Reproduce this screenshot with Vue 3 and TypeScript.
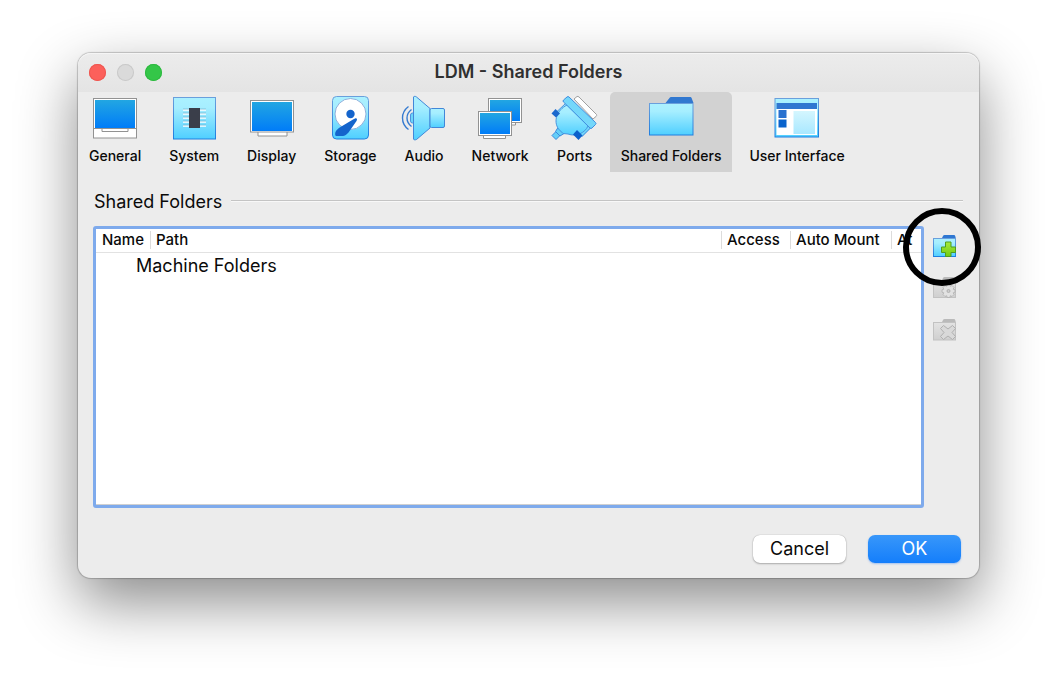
<script setup lang="ts">
import { ref } from 'vue'

interface Section {
  id: string
  label: string
}

const sections: Section[] = [
  { id: 'general', label: 'General' },
  { id: 'system', label: 'System' },
  { id: 'display', label: 'Display' },
  { id: 'storage', label: 'Storage' },
  { id: 'audio', label: 'Audio' },
  { id: 'network', label: 'Network' },
  { id: 'ports', label: 'Ports' },
  { id: 'folders', label: 'Shared Folders' },
  { id: 'interface', label: 'User Interface' },
]

const current = ref('folders')
const pins: number[] = [16, 20, 24, 28, 32]
</script>

<template>
  <div class="desktop">
    <main class="window">
      <header class="titlebar">
        <div class="lights">
          <button class="light close" type="button" aria-label="Close"></button>
          <button class="light minimise" type="button" aria-label="Minimise" disabled></button>
          <button class="light zoom" type="button" aria-label="Zoom"></button>
        </div>
        <h1>LDM - Shared Folders</h1>
      </header>

      <svg class="defs" width="0" height="0" aria-hidden="true">
        <defs>
          <linearGradient id="screen" x1="0" y1="0" x2="0" y2="1">
            <stop offset="0" stop-color="#22a6e2" />
            <stop offset="1" stop-color="#007cf8" />
          </linearGradient>
          <linearGradient id="aqua" x1="0" y1="0" x2="0" y2="1">
            <stop offset="0" stop-color="#abf1ff" />
            <stop offset="0.25" stop-color="#a6eeff" />
            <stop offset="1" stop-color="#4fcfff" />
          </linearGradient>
          <linearGradient id="edge" x1="0" y1="0" x2="0" y2="1">
            <stop offset="0" stop-color="#6a9fdc" />
            <stop offset="1" stop-color="#1f7fe0" />
          </linearGradient>
          <linearGradient id="pane" x1="0" y1="0" x2="0" y2="1">
            <stop offset="0" stop-color="#d4f6fe" />
            <stop offset="1" stop-color="#a9e8ff" />
          </linearGradient>
          <linearGradient id="leaf" x1="0" y1="0" x2="0" y2="1">
            <stop offset="0" stop-color="#a6ea3e" />
            <stop offset="1" stop-color="#6fcc10" />
          </linearGradient>
          <linearGradient id="ash" x1="0" y1="0" x2="0" y2="1">
            <stop offset="0" stop-color="#e3e3e3" />
            <stop offset="1" stop-color="#cfcfcf" />
          </linearGradient>
        </defs>
      </svg>

      <nav class="toolbar" aria-label="Settings sections">
        <button
          v-for="s in sections"
          :key="s.id"
          type="button"
          class="tab"
          :class="{ active: current === s.id }"
          :aria-pressed="current === s.id"
          @click="current = s.id"
        >
          <svg class="icon" viewBox="0 0 48 48" aria-hidden="true">
            <g v-if="s.id === 'general'">
              <rect x="2.5" y="4.5" width="43" height="39.5" fill="#fff" stroke="#929292" />
              <rect x="4" y="6" width="40" height="28" fill="url(#screen)" />
              <path d="M3 34.5H45M11 35V37.5H37V35" fill="none" stroke="#929292" />
            </g>
            <g v-else-if="s.id === 'system'">
              <rect x="3.5" y="3.5" width="42" height="41.5" fill="url(#aqua)" stroke="url(#edge)" />
              <g v-for="y in pins" :key="y">
                <path :d="`M13 ${y}h23`" stroke="#fff" stroke-width="1.5" />
                <path :d="`M13 ${y - 1}h23`" stroke="#65a9c8" stroke-width="0.6" />
              </g>
              <rect x="19" y="14" width="11" height="20" fill="#3a3e4a" />
            </g>
            <g v-else-if="s.id === 'display'">
              <path d="M10 37.5H39V42H10Z" fill="#fff" stroke="#929292" />
              <rect x="2.5" y="6.5" width="43" height="31.5" fill="#fff" stroke="#929292" />
              <rect x="4" y="8" width="40" height="29" fill="url(#screen)" />
            </g>
            <g v-else-if="s.id === 'storage'">
              <rect x="6.5" y="2.5" width="36" height="42.5" rx="4" fill="url(#aqua)" stroke="url(#edge)" />
              <circle cx="24.5" cy="20" r="15.5" fill="#fff" stroke="#8fb0dc" />
              <circle cx="24.5" cy="20" r="4.2" fill="#1464cc" />
              <path d="M27 25.5L29 24.5C31 23.8 31.5 25.5 30.5 27L22.500 38.500C20 41.500 18 42 15 42H10.500C8.800 42 9 39.500 9.500 38C10.300 35.800 12.500 34.500 14.500 33Z" fill="#1464cc" />
            </g>
            <g v-else-if="s.id === 'audio'" stroke-linejoin="round">
              <path d="M8.500 12.500C.5 18.500 .5 29.500 8.500 35.500M11.500 15.500C5.500 20 5.500 28 11.500 32.500" fill="none" stroke="#367bd0" stroke-width="1.4" />
              <rect x="10.5" y="19" width="5" height="10" rx="2" fill="#6cd6fb" stroke="#4d92dd" />
              <path d="M13.500 3C13.500 2.300 15.500 2 16.500 3L30 14.500V34L16.500 45.500C15.500 46 13.500 46 13.500 45Z" fill="url(#aqua)" stroke="#4287d8" />
              <rect x="30" y="14.5" width="14.5" height="19" rx="1.5" fill="url(#aqua)" stroke="#4287d8" />
            </g>
            <g v-else-if="s.id === 'network'">
              <path d="M21 28.5H39.5V31H21Z" fill="#fff" stroke="#929292" />
              <rect x="12.5" y="4.5" width="33" height="24" fill="#fff" stroke="#929292" />
              <rect x="14" y="6" width="30" height="21" fill="url(#screen)" />
              <path d="M7.5 41.5H29.5V44.5H7.5Z" fill="#fff" stroke="#929292" />
              <rect x="2.5" y="17.5" width="33" height="24" fill="#fff" stroke="#929292" />
              <rect x="4" y="19" width="30" height="21" fill="url(#screen)" />
            </g>
            <g v-else-if="s.id === 'ports'" stroke-linejoin="round">
              <path d="M23 5L26 2.500Q27 2 28 3L45.500 20.500Q46 21.500 45 22.500L42 25Z" fill="#fff" stroke="#a0a0a0" />
              <path d="M15 9L5 18.500L9.500 23L18 14Z" fill="#9be5fb" stroke="#4694df" />
              <path d="M36 28L26.500 38L31 42.500L40 33.500Z" fill="#72d7fa" stroke="#2f83db" />
              <path d="M5 37.500L9 41.500L5 45.500L1 41.500Z" fill="#65cff8" stroke="#3989dc" />
              <path d="M7 33.500L13 39.500L9 42L4.500 37.500Z" fill="#65cff8" stroke="#3989dc" />
              <path d="M16 11L37 32C34 39 25 43 17 40L12 39.500L7.500 35C2 27 6 16 16 11Z" fill="url(#aqua)" stroke="#4694df" />
              <path d="M4.500 15L9 19.500L5 23.500L0.500 19.500Z" fill="#1b68cd" />
              <path d="M26 36L31.500 41.500L27.500 46L22 40.500Z" fill="#0c60cb" />
              <path d="M16 3Q17 2 18 3L44.500 28.500Q45.500 29.500 44.500 30.500L41 34Q40 35 39 34L12.500 8Q11.500 7 12.500 6Z" fill="#74d7fa" stroke="#3f8edf" />
            </g>
            <g v-else-if="s.id === 'folders'">
              <path d="M18.500 9L22.500 4C23 3.300 23.500 3 24.500 3H43C44 3 44.500 3.500 44.800 4.500L46.500 9Z" fill="#3178d0" />
              <rect x="2.5" y="9.5" width="43.5" height="31.5" fill="url(#aqua)" stroke="url(#edge)" />
            </g>
            <g v-else>
              <rect x="2" y="4.5" width="43.5" height="38.5" fill="url(#aqua)" stroke="url(#edge)" />
              <rect x="3.5" y="9" width="40.5" height="6" fill="#3076d1" />
              <rect x="3.5" y="15" width="40.5" height="26" fill="#fff" />
              <rect x="5.5" y="16" width="8" height="8" fill="#2871cf" />
              <rect x="5.5" y="25.5" width="8" height="8" fill="#0963cc" />
              <rect x="20.5" y="17" width="21.5" height="23" fill="url(#pane)" />
            </g>
          </svg>
          <span>{{ s.label }}</span>
        </button>
      </nav>

      <section class="content" aria-labelledby="group-title">
        <div class="group">
          <h2 id="group-title">Shared Folders</h2>
          <div class="rule"></div>
        </div>

        <div class="editor">
          <div class="list">
            <table>
              <colgroup>
                <col class="c-name" />
                <col class="c-path" />
                <col class="c-access" />
                <col class="c-auto" />
                <col class="c-at" />
              </colgroup>
              <thead>
                <tr>
                  <th scope="col"><span>Name</span></th>
                  <th scope="col"><span>Path</span></th>
                  <th scope="col"><span>Access</span></th>
                  <th scope="col"><span>Auto Mount</span></th>
                  <th scope="col"><span>At</span></th>
                </tr>
              </thead>
              <tbody>
                <tr>
                  <td colspan="5">Machine Folders</td>
                </tr>
              </tbody>
            </table>
          </div>

          <div class="tools">
            <div class="marked">
              <button type="button" class="tool" aria-label="Add shared folder">
                <svg viewBox="0 0 24 24" aria-hidden="true">
                  <path d="M8.500 5L10 2Q10.500 1 11.500 1H21Q22 1 22.200 2L23 5Z" fill="#2f77d2" />
                  <rect x="0.5" y="4.5" width="22" height="18" fill="url(#aqua)" stroke="url(#edge)" />
                  <path d="M12.500 8H18V13H22.500V18.500H18V22.500H12.500V18.500H8.500V13H12.500Z" fill="url(#leaf)" stroke="#4e9e20" />
                </svg>
              </button>
              <svg class="ring" viewBox="0 0 78 78" aria-hidden="true">
                <circle cx="39" cy="39" r="36" fill="none" stroke="#000" stroke-width="6" />
              </svg>
            </div>
            <button type="button" class="tool" aria-label="Edit shared folder" disabled>
              <svg viewBox="0 0 24 24" aria-hidden="true">
                <path d="M8.500 5L10 2Q10.500 1 11.500 1H21Q22 1 22.200 2L23 5Z" fill="#bababa" />
                <rect x="0.5" y="4.5" width="22" height="17" fill="url(#ash)" stroke="#c2c2c2" />
                <path d="M14.200 8.500H16.800L17.300 10.300L19 9.500L21 11.500L20.200 13.200L22 13.800V16.200L20.200 16.800L21 18.500L19 20.500L17.300 19.700L16.800 21.500H14.200L13.700 19.700L12 20.500L10 18.500L10.800 16.800L9 16.200V13.800L10.800 13.200L10 11.500L12 9.500L13.700 10.300Z" fill="#e2e2e2" stroke="#b0b0b0" stroke-width="0.8" />
                <circle cx="15.5" cy="15" r="1.5" fill="#cdcdcd" stroke="#b0b0b0" />
              </svg>
            </button>
            <button type="button" class="tool" aria-label="Remove shared folder" disabled>
              <svg viewBox="0 0 24 24" aria-hidden="true">
                <path d="M8.500 5L10 2Q10.500 1 11.500 1H21Q22 1 22.200 2L23 5Z" fill="#bababa" />
                <rect x="0.5" y="4.5" width="22" height="17.5" fill="url(#ash)" stroke="#c2c2c2" />
                <path d="M10.500 7.500L15 11L19.500 7.500L22.500 10.500L19 14.500L22.500 18.500L19.500 21.500L15 18L10.500 21.500L7.500 18.500L11 14.500L7.500 10.500Z" fill="#d9d9d9" stroke="#b0b0b0" />
              </svg>
            </button>
          </div>
        </div>

        <footer class="actions">
          <button type="button" class="push">Cancel</button>
          <button type="button" class="push primary">OK</button>
        </footer>
      </section>
    </main>
  </div>
</template>

<style>
body {
  background: #fff;
}
</style>

<style scoped>
.desktop {
  box-sizing: border-box;
  display: flex;
  min-height: 100vh;
  padding: 53px 78px 103px;
  overflow: hidden;
  font-family: Inter, Roboto, "Liberation Sans", sans-serif;
  color: #0a0a0a;
}

button {
  margin: 0;
  padding: 0;
  border: 0;
  background: none;
  font: inherit;
  color: inherit;
}

.window {
  flex: 1;
  min-width: 0;
  display: flex;
  flex-direction: column;
  border-radius: 13px;
  background: #ececec;
  box-shadow: 0 0 1px 1px rgba(0, 0, 0, 0.2), 0 24px 60px rgba(0, 0, 0, 0.46);
}

.titlebar {
  display: grid;
  grid-template-columns: 1fr auto 1fr;
  align-items: center;
  height: 39px;
  padding: 0 11px;
  border-radius: 13px 13px 0 0;
  background: linear-gradient(#ececec, #e4e4e4);
  box-shadow: inset 0 1px 0 #f5f5f5;
}

.titlebar h1 {
  margin: 0;
  padding-bottom: 2px;
  font-size: 18px;
  line-height: 24px;
  font-weight: 600;
  color: #303030;
}

.lights {
  display: flex;
  gap: 11px;
}

.light {
  width: 17px;
  height: 17px;
  border-radius: 50%;
}

.close {
  background: #fc605b;
  box-shadow: inset 0 0 0 1px #ee5751;
}

.minimise {
  background: #dadada;
  box-shadow: inset 0 0 0 1px #c9c9c9;
}

.zoom {
  background: #34c648;
  box-shadow: inset 0 0 0 1px #2eb940;
}

.defs {
  position: absolute;
}

.toolbar {
  display: flex;
  gap: 6px;
}

.tab {
  display: flex;
  flex-direction: column;
  align-items: center;
  height: 80px;
  padding: 2px 11px 0;
  border-radius: 5px 5px 0 0;
  font-size: 14px;
  line-height: 20px;
  font-weight: 500;
  white-space: nowrap;
}

.tab.active {
  background: #d2d2d2;
}

.icon {
  display: block;
  width: 48px;
  height: 48px;
  margin: 0 -6px 4px;
}

.content {
  flex: 1;
  display: flex;
  flex-direction: column;
  padding: 18px 16px 15px 15px;
}

.group {
  display: flex;
  align-items: center;
  gap: 9px;
  height: 24px;
  padding-left: 1px;
}

.group h2 {
  margin: 0;
  font-size: 18px;
  line-height: 24px;
  font-weight: 400;
}

.rule {
  flex: 1;
  height: 1px;
  margin-bottom: 4px;
  background: #c4c4c4;
  box-shadow: 0 1px 0 #f8f8f8;
}

.editor {
  flex: 1;
  display: flex;
  gap: 9px;
  margin-top: 12px;
}

.list {
  flex: 1;
  min-width: 0;
  overflow: hidden;
  border: 3px solid #7eaaec;
  border-radius: 3px;
  background: #fff;
  box-shadow: inset 0 -1px 0 #d0d0d0;
}

table {
  width: 100%;
  table-layout: fixed;
  border-collapse: collapse;
}

.c-name {
  width: 54px;
}

.c-access {
  width: 69px;
}

.c-auto {
  width: 101px;
}

.c-at {
  width: 30px;
}

th {
  height: 23px;
  padding: 0 0 1px;
  box-sizing: border-box;
  border-bottom: 1px solid #e2e2e2;
  text-align: left;
  font-size: 15px;
  line-height: 18px;
  font-weight: 500;
  white-space: nowrap;
}

th span {
  display: block;
  padding-left: 5px;
  border-left: 1px solid #dcdcdc;
}

th:first-child span {
  border-left-color: transparent;
}

td {
  padding: 1px 0 0 40px;
  font-size: 18px;
  line-height: 24px;
}

.tools {
  display: flex;
  flex-direction: column;
  gap: 18px;
  width: 30px;
  padding-top: 8px;
}

.marked {
  position: relative;
  height: 24px;
}

.ring {
  position: absolute;
  top: -26px;
  left: -30px;
  width: 78px;
  height: 78px;
  pointer-events: none;
}

.tool {
  display: block;
  width: 24px;
  height: 24px;
}

.tool svg {
  display: block;
}

.actions {
  display: flex;
  justify-content: flex-end;
  gap: 22px;
  margin-top: 27px;
  padding-right: 2px;
}

.push {
  width: 93px;
  height: 28px;
  border-radius: 7px;
  background: #fff;
  box-shadow: 0 0 1px rgba(0, 0, 0, 0.35), 0 1px 2px rgba(0, 0, 0, 0.25);
  font-size: 18px;
  line-height: 28px;
}

.primary {
  background: linear-gradient(#3897fa, #147efb);
  box-shadow: 0 1px 2px rgba(20, 110, 240, 0.35);
  color: #fff;
}
</style>
